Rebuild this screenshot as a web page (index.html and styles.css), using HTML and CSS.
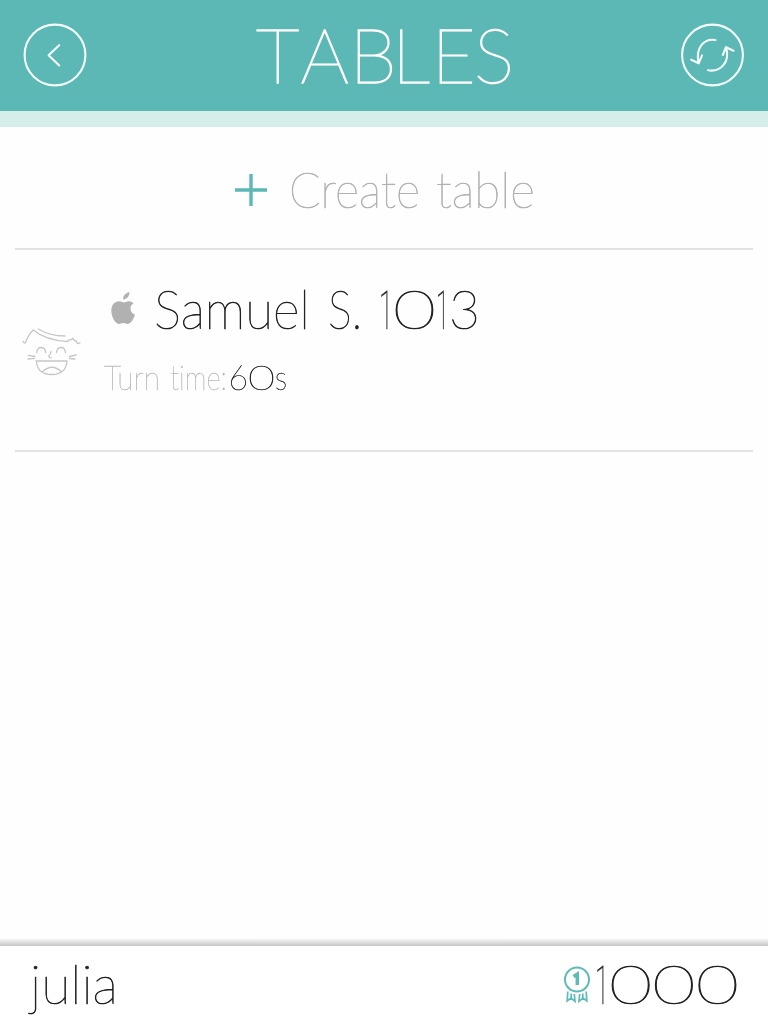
FILE: index.html
```html
<!DOCTYPE html>
<html lang="en">
<head>
<meta charset="utf-8">
<title>Tables</title>
<link rel="stylesheet" href="styles.css">
</head>
<body>
<div class="app">
  <header class="header">
    <svg class="round-button" viewBox="0 0 64 64"><circle cx="32" cy="32" r="30.4"/><path d="M36.200 22.200 25.600 32.200l10.600 10.200"/></svg>
    <svg class="title" viewBox="0 0 270 111"><text y="83" x="7 51.500 100.500 143 182.500 225">TABLES</text></svg>
    <svg class="round-button" viewBox="0 0 64 64"><circle cx="31.500" cy="32" r="30.4"/><path d="M34.500 17C23 15 14 25 17.700 40.300M10.200 36.700 17.700 40.300 21 32.400M27 47.300C40 49.500 49.500 38.500 45 24.200M41.800 32 45 24.200 52.500 27.700"/></svg>
  </header>
  <main class="list">
    <div class="row create">
      <svg class="plus" viewBox="0 0 32 32"><path d="M16 0v32M0 16h32"/></svg>
      <svg class="create-label" viewBox="0 0 250 60"><text y="43" x="1" textLength="131" lengthAdjust="spacingAndGlyphs">Create</text><text y="43" x="148" textLength="99" lengthAdjust="spacingAndGlyphs">table</text></svg>
    </div>
    <div class="row player">
      <svg class="avatar" viewBox="0 0 60 52"><path d="M0 17.500q2.500 3 3 0Q5 11 10.300 6 22 16 44.700 17.700q0-2.500 3-1.700l2.300-1.700q1 3 3.500 2.700 0 4 3.500 1.700M15.300 5Q27 12 42 12M13.700 28.500q.5-5 4.500-5t4.500 5M33.500 28.500q.5-5 4.500-5t4.500 5M28 27.500q0 2.500-2.300 4.500 0 1.800 2.600 1.700M5.300 31.300l6.700 1.200M5 35l6.500-.6M46.500 32.500l6.500-1.500M46.500 34.500l5.500.5M13.300 37H44Q43 50.500 28.700 50.500T13.300 37M19.300 48q9.500-9.500 19.400 0"/></svg>
      <div class="details">
        <div class="name">
          <svg class="apple" viewBox="0 0 26 34"><path d="M12 7.500C12 3.500 15 .8 18.400 0c.4 4-2.400 7.300-6.400 7.500ZM22.500 11.300c-4.700 3-3.700 9.400 1.500 11.500-1.400 4.300-4.200 9.200-7.300 9.200-1.700 0-2.200-1-4.200-1s-2.700 1-4.300 1C4.400 32 .3 25 .3 18.500.3 13 3.900 9.300 8 9.300c2 0 3.500 1.200 4.700 1.200 1.500 0 3-1.300 5.100-1.300 1.900 0 3.600.8 4.700 2.100Z"/></svg>
          <svg class="name-label" viewBox="0 0 330 56"><text y="43.500" x="-2" textLength="156" lengthAdjust="spacingAndGlyphs">Samuel</text><text y="43.500" x="172" textLength="34" lengthAdjust="spacingAndGlyphs">S.</text><text y="43.500"><tspan class="one" x="223" textLength="14" lengthAdjust="spacingAndGlyphs">1</tspan><tspan x="237" textLength="43" lengthAdjust="spacingAndGlyphs">0</tspan><tspan class="one" x="280" textLength="13" lengthAdjust="spacingAndGlyphs">1</tspan><tspan x="293" textLength="31" lengthAdjust="spacingAndGlyphs">3</tspan></text></svg>
        </div>
        <svg class="turn-label" viewBox="0 0 190 40"><text class="muted" y="28" x="0" textLength="56" lengthAdjust="spacingAndGlyphs">Turn</text><text class="muted" y="28" x="66" textLength="57" lengthAdjust="spacingAndGlyphs">time:</text><text y="28"><tspan x="124.500" textLength="19.500" lengthAdjust="spacingAndGlyphs">6</tspan><tspan x="144" textLength="27" lengthAdjust="spacingAndGlyphs">0</tspan><tspan x="171" textLength="12" lengthAdjust="spacingAndGlyphs">s</tspan></text></svg>
      </div>
    </div>
  </main>
  <div class="shade"></div>
  <footer class="footer">
    <svg class="user" viewBox="0 0 100 78"><text y="58" x="5" textLength="88" lengthAdjust="spacingAndGlyphs">julia</text></svg>
    <div class="score">
      <svg class="medal" viewBox="0 0 28 38"><circle cx="14" cy="13.500" r="12"/><path class="digit" d="M10.500 10.500 14.300 8.200V19"/><path class="ribbon" d="M4.800 25.500 4.200 35 8 32l4 3.300-.7-7.300M8.200 27.500V32M23.200 25.500l.6 9.500L20 32l-4 3.300.7-7.300M19.800 27.500V32"/></svg>
      <svg class="points" viewBox="0 0 146 78"><text y="57.500"><tspan class="one" x="0" textLength="14" lengthAdjust="spacingAndGlyphs">1</tspan><tspan x="14" textLength="130" lengthAdjust="spacingAndGlyphs">000</tspan></text></svg>
    </div>
  </footer>
</div>
</body>
</html>
```
FILE: styles.css
```css
* { box-sizing: border-box; }
body { margin: 0; background: #fefefe; font-family: Lato, "Open Sans", sans-serif; font-weight: 100; }
svg { display: block; overflow: visible; fill: none; flex: none; will-change: opacity; }
text { fill: #222; stroke: #222; stroke-width: .7; font-variant-ligatures: none; }
.app { width: 768px; height: 1024px; display: flex; flex-direction: column; overflow: hidden; }
.header { height: 127px; flex: none; display: flex; justify-content: space-between; padding: 0 23px; background: #5cb8b4; border-bottom: 16px solid #d6eeea; }
.round-button { width: 64px; height: 64px; margin-top: 23px; stroke: #f4fffd; stroke-width: 2.100; stroke-linecap: round; stroke-linejoin: round; }
.title { width: 270px; height: 111px; }
.title text { fill: #fff; stroke: #fff; stroke-width: 1.300; font-size: 76px; }
.list { flex: 1; padding: 0 15px; }
.row { display: flex; border-bottom: 2px solid #e2e2e2; }
.create { height: 123px; padding-left: 220px; }
.plus { width: 32px; height: 32px; margin-top: 47px; stroke: #5cb8b4; stroke-width: 3.400; }
.create-label { width: 250px; height: 60px; margin: 38px 0 0 21px; }
.create-label text { font-size: 49px; fill: #b0b0b0; stroke: #b0b0b0; }
.player { height: 202px; padding-left: 8px; }
.avatar { width: 60px; height: 52px; margin-top: 74px; stroke: #c6c6c6; stroke-width: 1.300; stroke-linecap: round; stroke-linejoin: round; }
.details { padding: 35px 0 0 21px; }
.name { display: flex; padding-left: 7px; }
.apple { width: 26px; height: 34px; margin-top: 7px; fill: #b1b1b1; }
.name-label { width: 330px; height: 56px; margin-left: 19px; }
.name-label text { font-size: 53px; }
.one { font-family: Roboto, sans-serif; stroke-width: .4; }
.turn-label { width: 190px; height: 40px; margin-top: 21px; }
.turn-label text { font-size: 33px; stroke-width: .4; }
.turn-label .muted { fill: #b9b9b9; stroke: #b9b9b9; }
.shade { height: 8px; flex: none; background: linear-gradient(#fefefe, #c5c5c5); }
.footer { height: 78px; flex: none; display: flex; justify-content: space-between; padding: 0 27px 0 25px; background: #fff; }
.user { width: 100px; height: 78px; }
.user text, .points text { font-size: 53px; }
.score { display: flex; }
.medal { width: 28px; height: 38px; margin: 20px 4px 0 0; stroke: #5cbbb7; stroke-width: 2; }
.medal .digit { stroke-width: 3.500; }
.medal .ribbon { stroke-width: 1.700; }
.points { width: 146px; height: 78px; }
```
